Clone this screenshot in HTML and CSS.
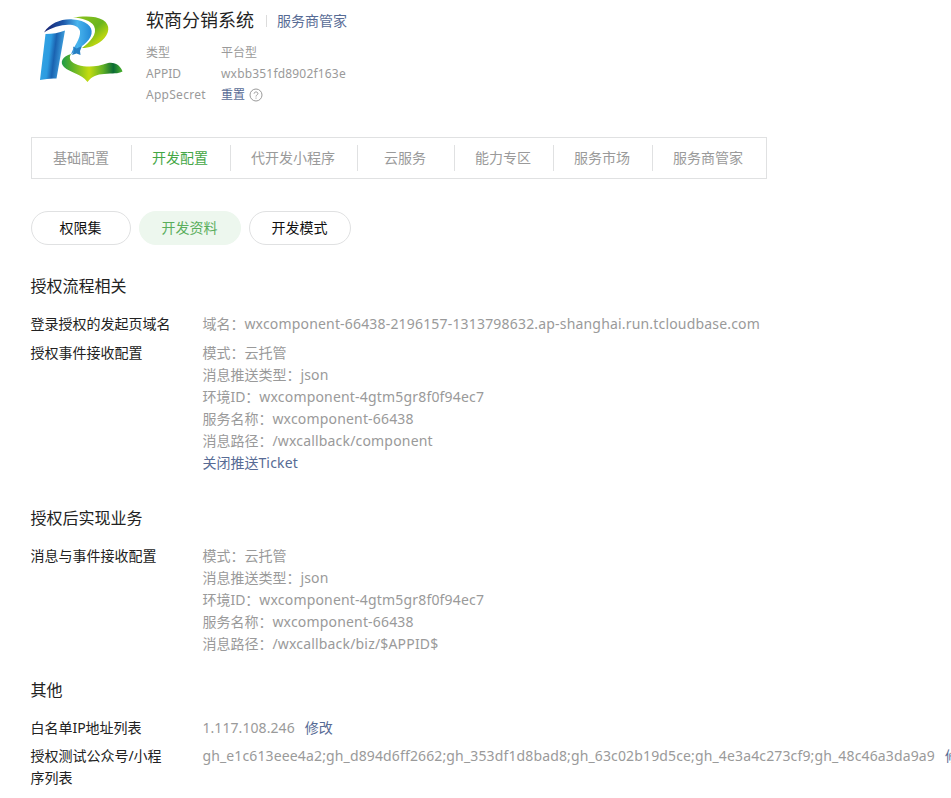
FILE: index.html
```html
<!DOCTYPE html>
<html lang="zh-CN">
<head>
<meta charset="utf-8">
<title>软商分销系统</title>
<link rel="stylesheet" href="styles.css">
</head>
<body>
<header class="profile">
  <svg class="logo" viewBox="0 0 110 90" width="110" height="90" aria-hidden="true">
    <defs>
      <linearGradient id="stem" x1="0" y1="0" x2="1" y2="0.25"><stop offset="0" stop-color="#35a8e6"/><stop offset=".45" stop-color="#2c9be0"/><stop offset=".65" stop-color="#1a62b0"/><stop offset="1" stop-color="#43a8e4"/></linearGradient>
      <linearGradient id="arc" x1="0" y1="0" x2="1" y2="0"><stop offset="0" stop-color="#19206f"/><stop offset=".4" stop-color="#1d56a8"/><stop offset=".7" stop-color="#49b5ee"/><stop offset="1" stop-color="#2389d6"/></linearGradient>
      <linearGradient id="leaf" x1="0" y1="0" x2="1" y2="1"><stop offset="0" stop-color="#8fc31c"/><stop offset=".5" stop-color="#6ab51f"/><stop offset=".75" stop-color="#b9d510"/><stop offset="1" stop-color="#88c41c"/></linearGradient>
      <linearGradient id="tail" x1="0" y1="0" x2="1" y2="0"><stop offset="0" stop-color="#1e9c48"/><stop offset=".15" stop-color="#56ae2c"/><stop offset=".45" stop-color="#c4dc10"/><stop offset=".68" stop-color="#5fb026"/><stop offset=".85" stop-color="#0b6b35"/><stop offset="1" stop-color="#4eb52e"/></linearGradient>
    </defs>
    <path fill="url(#stem)" d="M15.500 29Q26 29 35 25.500L26.500 73.500Q19 73 10 75Z"/>
    <path fill="url(#arc)" d="M14 27.500C20 18 32 13.500 43 14.500C56 15.500 63 21 61.500 29C60 37 50 42 41 49.500C43 42 51 34 50 26C47 16 27 19 14 27.500Z"/>
    <path fill="url(#leaf)" d="M43 12.500C53 11 66 10.500 73 15C81 20 79.500 29 72 35.500C66 40.500 59 43 52 43C60 37 68 29 64 21C61 15.500 52 13 43 12.500Z"/>
    <path fill="url(#tail)" d="M41 49C33 51 29 57 34 62C40 68 51 68 57.500 77C62 71 67 69.500 74 69C83 68 88 69 92.500 66.500C91 61 85 56.500 78 58C67 62 57 62.500 48 60C41 57.500 38 54 41 49Z"/>
    <path fill="#2680c4" d="M43 41.500L46.500 43.500L52 41L50 46L50.500 50L46.500 48.500L42 50L44 46Z"/>
  </svg>
  <div class="info">
    <div class="title-row"><h1>软商分销系统</h1><a class="link manager">服务商管家</a></div>
    <dl class="meta">
      <dt>类型</dt><dd>平台型</dd>
      <dt>APPID</dt><dd class="appid">wxbb351fd8902f163e</dd>
      <dt class="secret">AppSecret</dt>
      <dd><a class="link">重置</a><svg class="help" viewBox="0 0 14 14" width="14" height="14" aria-hidden="true"><circle cx="7" cy="7" r="6"/><path d="M5.1 5.7C5.1 3.4 8.9 3.4 8.9 5.6C8.9 6.9 7 6.900 7 8.500M7 9.600V10.600"/></svg></dd>
    </dl>
  </div>
</header>

<nav class="tabs">
  <a>基础配置</a><a class="active">开发配置</a><a>代开发小程序</a><a class="wide">云服务</a><a>能力专区</a><a>服务市场</a><a>服务商管家</a>
</nav>

<div class="pills">
  <a class="short">权限集</a><a class="active">开发资料</a><a>开发模式</a>
</div>

<section class="group auth">
  <h2>授权流程相关</h2>
  <div class="row">
    <div class="label">登录授权的发起页域名</div>
    <div class="value"><p>域名：<span class="code">wxcomponent-66438-2196157-1313798632.ap-shanghai.run.tcloudbase.com</span></p></div>
  </div>
  <div class="row">
    <div class="label">授权事件接收配置</div>
    <div class="value">
      <p>模式：云托管</p>
      <p>消息推送类型：<span class="code">json</span></p>
      <p>环境ID：<span class="code">wxcomponent-4gtm5gr8f0f94ec7</span></p>
      <p>服务名称：<span class="code">wxcomponent-66438</span></p>
      <p>消息路径：<span class="code">/wxcallback/component</span></p>
      <p><a class="link">关闭推送<span class="code">Ticket</span></a></p>
    </div>
  </div>
</section>

<section class="group business">
  <h2>授权后实现业务</h2>
  <div class="row">
    <div class="label">消息与事件接收配置</div>
    <div class="value">
      <p>模式：云托管</p>
      <p>消息推送类型：<span class="code">json</span></p>
      <p>环境ID：<span class="code">wxcomponent-4gtm5gr8f0f94ec7</span></p>
      <p>服务名称：<span class="code">wxcomponent-66438</span></p>
      <p>消息路径：<span class="code">/wxcallback/biz/$APPID$</span></p>
    </div>
  </div>
</section>

<section class="group other">
  <h2>其他</h2>
  <div class="row">
    <div class="label">白名单IP地址列表</div>
    <div class="value"><p><span class="ip">1.117.108.246</span><a class="link edit">修改</a></p></div>
  </div>
  <div class="row">
    <div class="label">授权测试公众号/小程序列表</div>
    <div class="value"><p><span class="ids">gh_e1c613eee4a2;gh_d894d6ff2662;gh_353df1d8bad8;gh_63c02b19d5ce;gh_4e3a4c273cf9;gh_48c46a3da9a9</span><a class="link edit">修改</a></p></div>
  </div>
</section>
</body>
</html>
```
FILE: styles.css
```css
* { box-sizing: border-box; }
html { overflow: hidden; }
body {
  margin: 0;
  height: 798px;
  padding: 5px 0 0 30px;
  overflow: hidden;
  background: #fff;
  color: #222;
  font: 14px/22px "Noto Sans", "Noto Sans CJK SC", sans-serif;
}
h1, h2, p, dl, dd { margin: 0; font-weight: 400; }
.link { color: #576b95; }
.code { letter-spacing: .18px; }
.ip { letter-spacing: .08px; }
.ids { letter-spacing: .137px; }

.profile { display: flex; height: 132px; }
.logo { flex: none; }
.info { margin-left: 6px; }
.title-row { display: flex; align-items: center; height: 30px; }
h1 { font-size: 18px; line-height: 30px; }
.manager { display: flex; align-items: center; margin-left: 12px; padding-top: 1px; }
.manager::before { content: ""; width: 1px; height: 12px; margin-right: 10px; background: #dcdcdc; }
.meta {
  display: grid;
  grid-template-columns: 75px auto;
  grid-auto-rows: 21px;
  margin-top: 7px;
  font-size: 12px;
  line-height: 21px;
  color: #9a9a9a;
}
.meta dd { display: flex; align-items: center; }
.meta .appid { letter-spacing: .18px; }
.meta .secret { letter-spacing: .27px; }
.help { margin-left: 4px; fill: none; stroke: #9a9a9a; stroke-width: 1; }

.tabs {
  display: flex;
  align-items: center;
  width: 736px;
  height: 42px;
  margin-left: 1px;
  border: 1px solid #e0e1e2;
  color: #9a9a9a;
}
.tabs a { padding: 0 22px 0 20px; line-height: 26px; border-right: 1px solid #e0e1e2; }
.tabs a:first-child { padding-left: 21px; }
.tabs a.wide { padding: 0 28px 0 26px; }
.tabs a:last-child { border-right: 0; }
.tabs .active { color: #44a746; }

.pills { display: flex; gap: 8px; margin: 32px 0 0 1px; }
.pills a {
  width: 102px;
  height: 34px;
  padding-right: 1px;
  border: 1px solid #e0e1e2;
  border-radius: 17px;
  line-height: 32px;
  text-align: center;
  color: #111;
}
.pills .short { width: 100px; }
.pills .active { border-color: #edf7ee; background: #edf7ee; color: #5aae5c; }

.group { padding-left: .4px; }
.group h2 { font-size: 16px; line-height: 24px; }
.auth { margin-top: 29px; }
.business { margin-top: 32px; }
.other { margin-top: 23px; }
.row { display: flex; margin-top: 7px; }
.group h2 + .row { margin-top: 15px; }
.other .row + .row { margin-top: 6px; }
.label { flex: none; width: 142px; margin-right: 30px; }
.value { color: #9a9a9a; white-space: nowrap; }
.edit { margin-left: 10px; }
```
